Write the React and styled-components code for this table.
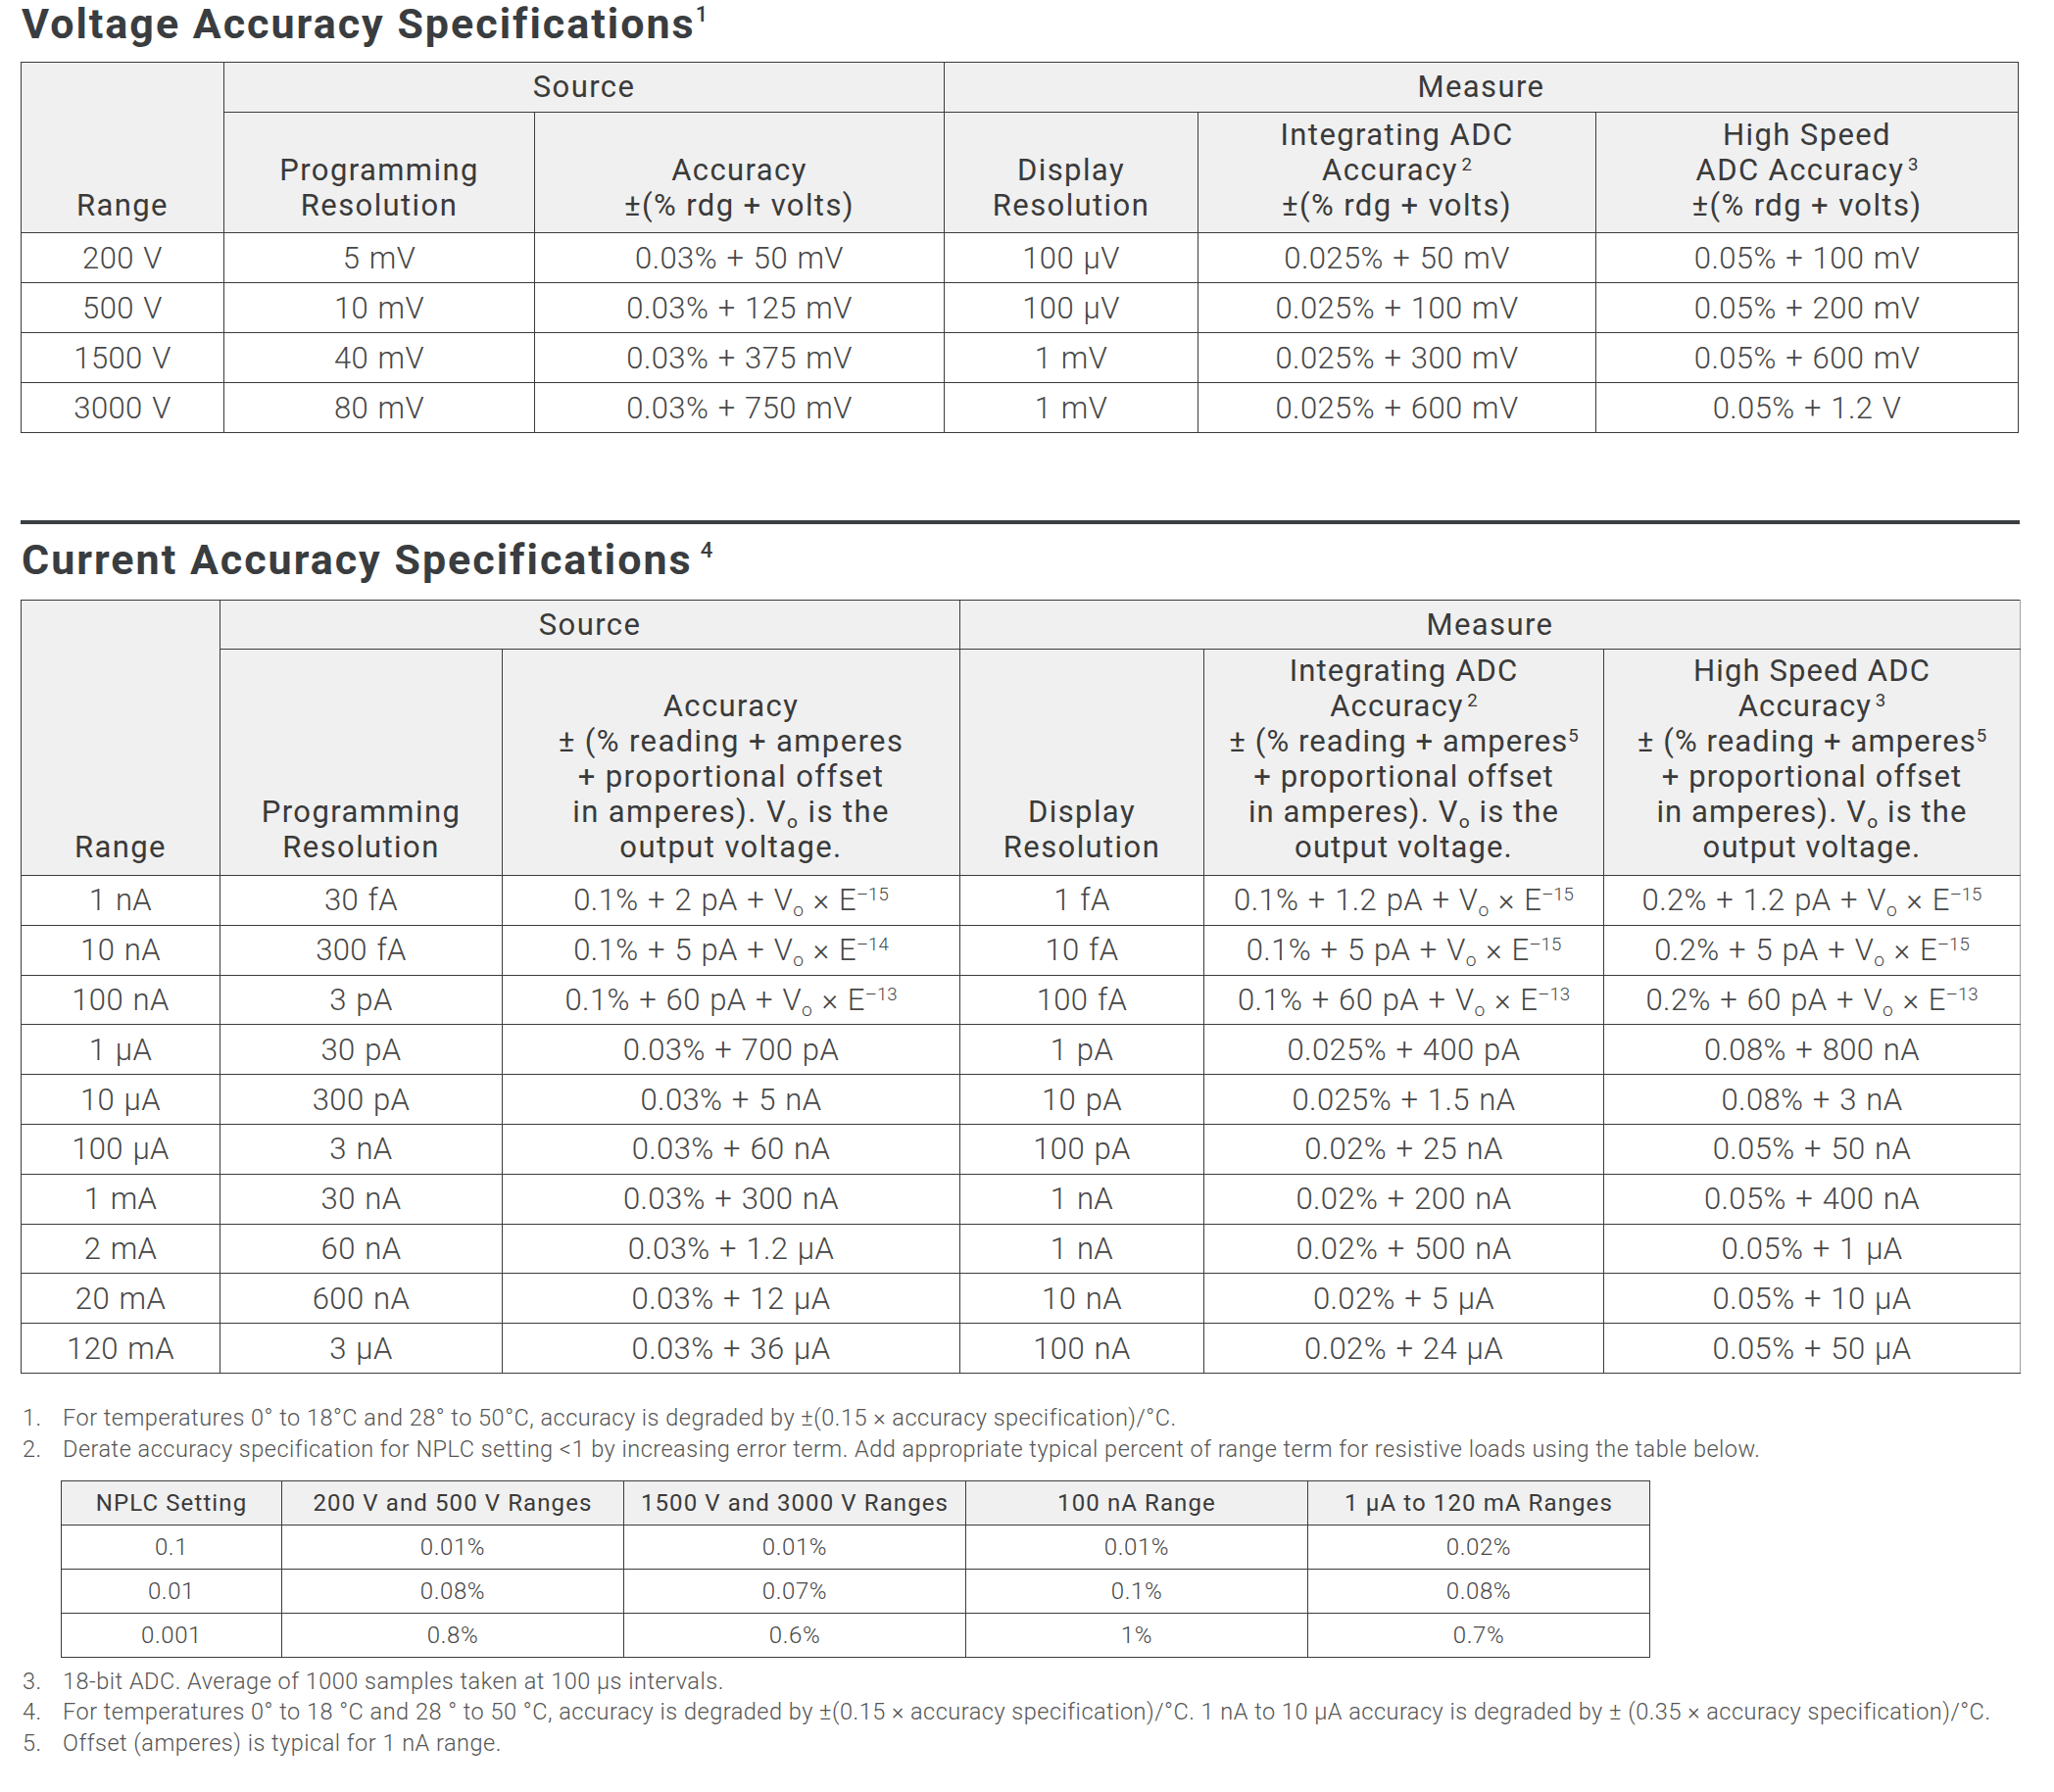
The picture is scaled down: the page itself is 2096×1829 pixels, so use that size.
import React from "react";
import styled, { createGlobalStyle } from "styled-components";

const GlobalStyle = createGlobalStyle`
  html, body {
    margin: 0;
    padding: 0;
    background: #ffffff;
  }
  body {
    font-family: Roboto, "Liberation Sans", Arial, sans-serif;
    color: #4a4a4a;
  }
`;

const Page = styled.div`
  width: 2040px;
  padding-left: 21px;
`;

const Title = styled.h2`
  margin: ${(p) => p.$top || 0}px 0 ${(p) => p.$bottom || 0}px 1px;
  font-size: 43px;
  line-height: 48px;
  font-weight: 700;
  color: #3a3d40;
  letter-spacing: 2px;
`;

const TitleSup = styled.sup`
  font-size: 22px;
  font-weight: 500;
  vertical-align: 17px;
  line-height: 0;
  letter-spacing: 0;
  margin-left: ${(p) => (p.$gap ? 8 : 0)}px;
`;

const Divider = styled.hr`
  margin: 89px 0 0 0;
  border: none;
  height: 4px;
  background: #3b3f43;
`;

const Table = styled.table`
  border-collapse: collapse;
  table-layout: fixed;
  width: ${(p) => p.$width}px;
  margin-left: ${(p) => p.$left || 0}px;
`;

const Col = styled.col`
  width: ${(p) => p.$w}px;
`;

const Th = styled.th`
  background: #f0f0f0;
  border: 1px solid #3c3c3c;
  font-weight: 400;
  color: #3a3a3a;
  font-size: ${(p) => p.$size || 31}px;
  letter-spacing: ${(p) => p.$ls ?? 1.4}px;
  line-height: ${(p) => p.$lh || 36}px;
  text-align: center;
  vertical-align: ${(p) => (p.$bottom ? "bottom" : "middle")};
  padding: 0 0 ${(p) => (p.$bottom ? p.$pb || 9 : 0)}px 0;
  height: ${(p) => p.$h}px;
  white-space: nowrap;
  &:last-child {
    border-right-color: ${(p) => p.$edge || "#3c3c3c"};
  }
`;

const Td = styled.td`
  border: 1px solid #3c3c3c;
  font-weight: 300;
  color: #474747;
  font-size: ${(p) => p.$size || 31}px;
  letter-spacing: ${(p) => p.$ls ?? 0.4}px;
  word-spacing: 1.5px;
  line-height: 1;
  text-align: center;
  vertical-align: middle;
  padding: 0;
  height: ${(p) => p.$h}px;
  white-space: nowrap;
  &:last-child {
    border-right-color: ${(p) => p.$edge || "#3c3c3c"};
  }
`;

const Sup = styled.sup`
  font-size: 0.6em;
  line-height: 0;
  letter-spacing: 0;
  vertical-align: 0.55em;
  margin-left: ${(p) => (p.$gap ? "0.2em" : "0")};
`;

const Sub = styled.sub`
  font-size: 0.62em;
  line-height: 0;
  vertical-align: -0.3em;
`;

const Notes = styled.ol`
  list-style: none;
  margin: ${(p) => p.$top}px 0 ${(p) => p.$bottom || 0}px 0;
  padding: 0;
  font-size: 23.5px;
  letter-spacing: 0.5px;
  line-height: ${(p) => p.$lh || 32}px;
  font-weight: 300;
  color: #555555;
`;

const Note = styled.li`
  display: flex;
`;

const NoteNum = styled.span`
  width: 41px;
  padding-left: 2px;
  flex: none;
`;

const vo = (pre, exp) => (
  <>
    {pre} + V<Sub>o</Sub> × E<Sup>–{exp}</Sup>
  </>
);

const voltageRows = [
  ["200 V", "5 mV", "0.03% + 50 mV", "100 µV", "0.025% + 50 mV", "0.05% + 100 mV"],
  ["500 V", "10 mV", "0.03% + 125 mV", "100 µV", "0.025% + 100 mV", "0.05% + 200 mV"],
  ["1500 V", "40 mV", "0.03% + 375 mV", "1 mV", "0.025% + 300 mV", "0.05% + 600 mV"],
  ["3000 V", "80 mV", "0.03% + 750 mV", "1 mV", "0.025% + 600 mV", "0.05% + 1.2 V"],
];

const currentRows = [
  ["1 nA", "30 fA", vo("0.1% + 2 pA", 15), "1 fA", vo("0.1% + 1.2 pA", 15), vo("0.2% + 1.2 pA", 15)],
  ["10 nA", "300 fA", vo("0.1% + 5 pA", 14), "10 fA", vo("0.1% + 5 pA", 15), vo("0.2% + 5 pA", 15)],
  ["100 nA", "3 pA", vo("0.1% + 60 pA", 13), "100 fA", vo("0.1% + 60 pA", 13), vo("0.2% + 60 pA", 13)],
  ["1 µA", "30 pA", "0.03% + 700 pA", "1 pA", "0.025% + 400 pA", "0.08% + 800 nA"],
  ["10 µA", "300 pA", "0.03% + 5 nA", "10 pA", "0.025% + 1.5 nA", "0.08% + 3 nA"],
  ["100 µA", "3 nA", "0.03% + 60 nA", "100 pA", "0.02% + 25 nA", "0.05% + 50 nA"],
  ["1 mA", "30 nA", "0.03% + 300 nA", "1 nA", "0.02% + 200 nA", "0.05% + 400 nA"],
  ["2 mA", "60 nA", "0.03% + 1.2 µA", "1 nA", "0.02% + 500 nA", "0.05% + 1 µA"],
  ["20 mA", "600 nA", "0.03% + 12 µA", "10 nA", "0.02% + 5 µA", "0.05% + 10 µA"],
  ["120 mA", "3 µA", "0.03% + 36 µA", "100 nA", "0.02% + 24 µA", "0.05% + 50 µA"],
];

const nplcRows = [
  ["0.1", "0.01%", "0.01%", "0.01%", "0.02%"],
  ["0.01", "0.08%", "0.07%", "0.1%", "0.08%"],
  ["0.001", "0.8%", "0.6%", "1%", "0.7%"],
];

const VoltageTable = () => (
  <Table $width={2038}>
    <colgroup>
      {[207, 317, 418, 259, 406, 431].map((w, i) => (
        <Col key={i} $w={w} />
      ))}
    </colgroup>
    <thead>
      <tr>
        <Th rowSpan={2} $bottom>Range</Th>
        <Th colSpan={2} $h={50}>Source</Th>
        <Th colSpan={3} $h={50}>Measure</Th>
      </tr>
      <tr>
        <Th $bottom $h={113}>Programming<br />Resolution</Th>
        <Th $bottom>Accuracy<br />±(% rdg + volts)</Th>
        <Th $bottom>Display<br />Resolution</Th>
        <Th $bottom>Integrating ADC<br />Accuracy<Sup $gap>2</Sup><br />±(% rdg + volts)</Th>
        <Th $bottom>High Speed<br />ADC Accuracy<Sup $gap>3</Sup><br />±(% rdg + volts)</Th>
      </tr>
    </thead>
    <tbody>
      {voltageRows.map((row, r) => (
        <tr key={r}>
          {row.map((c, i) => (
            <Td key={i} $h={50}>{c}</Td>
          ))}
        </tr>
      ))}
    </tbody>
  </Table>
);

const CurrentTable = () => (
  <Table $width={2040}>
    <colgroup>
      {[203, 288, 467, 249, 408, 425].map((w, i) => (
        <Col key={i} $w={w} />
      ))}
    </colgroup>
    <thead>
      <tr>
        <Th rowSpan={2} $bottom $pb={10}>Range</Th>
        <Th colSpan={2} $h={49}>Source</Th>
        <Th colSpan={3} $h={49} $edge="#a0a0a0">Measure</Th>
      </tr>
      <tr>
        <Th $bottom $pb={10} $h={220}>Programming<br />Resolution</Th>
        <Th $bottom $pb={10}>
          Accuracy<br />± (% reading + amperes<br />+ proportional offset<br />
          in amperes). V<Sub>o</Sub> is the<br />output voltage.
        </Th>
        <Th $bottom $pb={10}>Display<br />Resolution</Th>
        <Th $bottom $pb={10} $ls={1.1}>
          Integrating ADC<br />Accuracy<Sup $gap>2</Sup><br />± (% reading + amperes<Sup>5</Sup>
          <br />+ proportional offset<br />in amperes). V<Sub>o</Sub> is the<br />output voltage.
        </Th>
        <Th $bottom $pb={10} $ls={1.1} $edge="#a0a0a0">
          High Speed ADC<br />Accuracy<Sup $gap>3</Sup><br />± (% reading + amperes<Sup>5</Sup>
          <br />+ proportional offset<br />in amperes). V<Sub>o</Sub> is the<br />output voltage.
        </Th>
      </tr>
    </thead>
    <tbody>
      {currentRows.map((row, r) => (
        <tr key={r}>
          {row.map((c, i) => (
            <Td key={i} $h={49.8} $edge="#a0a0a0">{c}</Td>
          ))}
        </tr>
      ))}
    </tbody>
  </Table>
);

const NplcTable = () => (
  <Table $width={1621} $left={41}>
    <colgroup>
      {[225, 349, 349, 349, 349].map((w, i) => (
        <Col key={i} $w={w} />
      ))}
    </colgroup>
    <thead>
      <tr>
        {["NPLC Setting", "200 V and 500 V Ranges", "1500 V and 3000 V Ranges", "100 nA Range", "1 µA to 120 mA Ranges"].map(
          (h) => (
            <Th key={h} $h={44} $size={24} $ls={1.1} $lh={26}>{h}</Th>
          )
        )}
      </tr>
    </thead>
    <tbody>
      {nplcRows.map((row, r) => (
        <tr key={r}>
          {row.map((c, i) => (
            <Td key={i} $h={44} $size={24} $ls={0.6}>{c}</Td>
          ))}
        </tr>
      ))}
    </tbody>
  </Table>
);

export default function App() {
  return (
    <Page>
      <GlobalStyle />
      <Title $bottom={15}>
        Voltage Accuracy Specifications<TitleSup>1</TitleSup>
      </Title>
      <VoltageTable />

      <Divider />
      <Title $top={12} $bottom={17}>
        Current Accuracy Specifications<TitleSup $gap>4</TitleSup>
      </Title>
      <CurrentTable />

      <Notes $top={29} $bottom={16}>
        <Note>
          <NoteNum>1.</NoteNum>
          For temperatures 0° to 18°C and 28° to 50°C, accuracy is degraded by ±(0.15 × accuracy specification)/°C.
        </Note>
        <Note>
          <NoteNum>2.</NoteNum>
          Derate accuracy specification for NPLC setting &lt;1 by increasing error term. Add appropriate typical percent of range term for resistive loads using the table below.
        </Note>
      </Notes>
      <NplcTable />
      <Notes $top={9} $lh={31.5}>
        <Note>
          <NoteNum>3.</NoteNum>
          18-bit ADC. Average of 1000 samples taken at 100 µs intervals.
        </Note>
        <Note>
          <NoteNum>4.</NoteNum>
          For temperatures 0° to 18 °C and 28 ° to 50 °C, accuracy is degraded by ±(0.15 × accuracy specification)/°C. 1 nA to 10 µA accuracy is degraded by ± (0.35 × accuracy specification)/°C.
        </Note>
        <Note>
          <NoteNum>5.</NoteNum>
          Offset (amperes) is typical for 1 nA range.
        </Note>
      </Notes>
    </Page>
  );
}
